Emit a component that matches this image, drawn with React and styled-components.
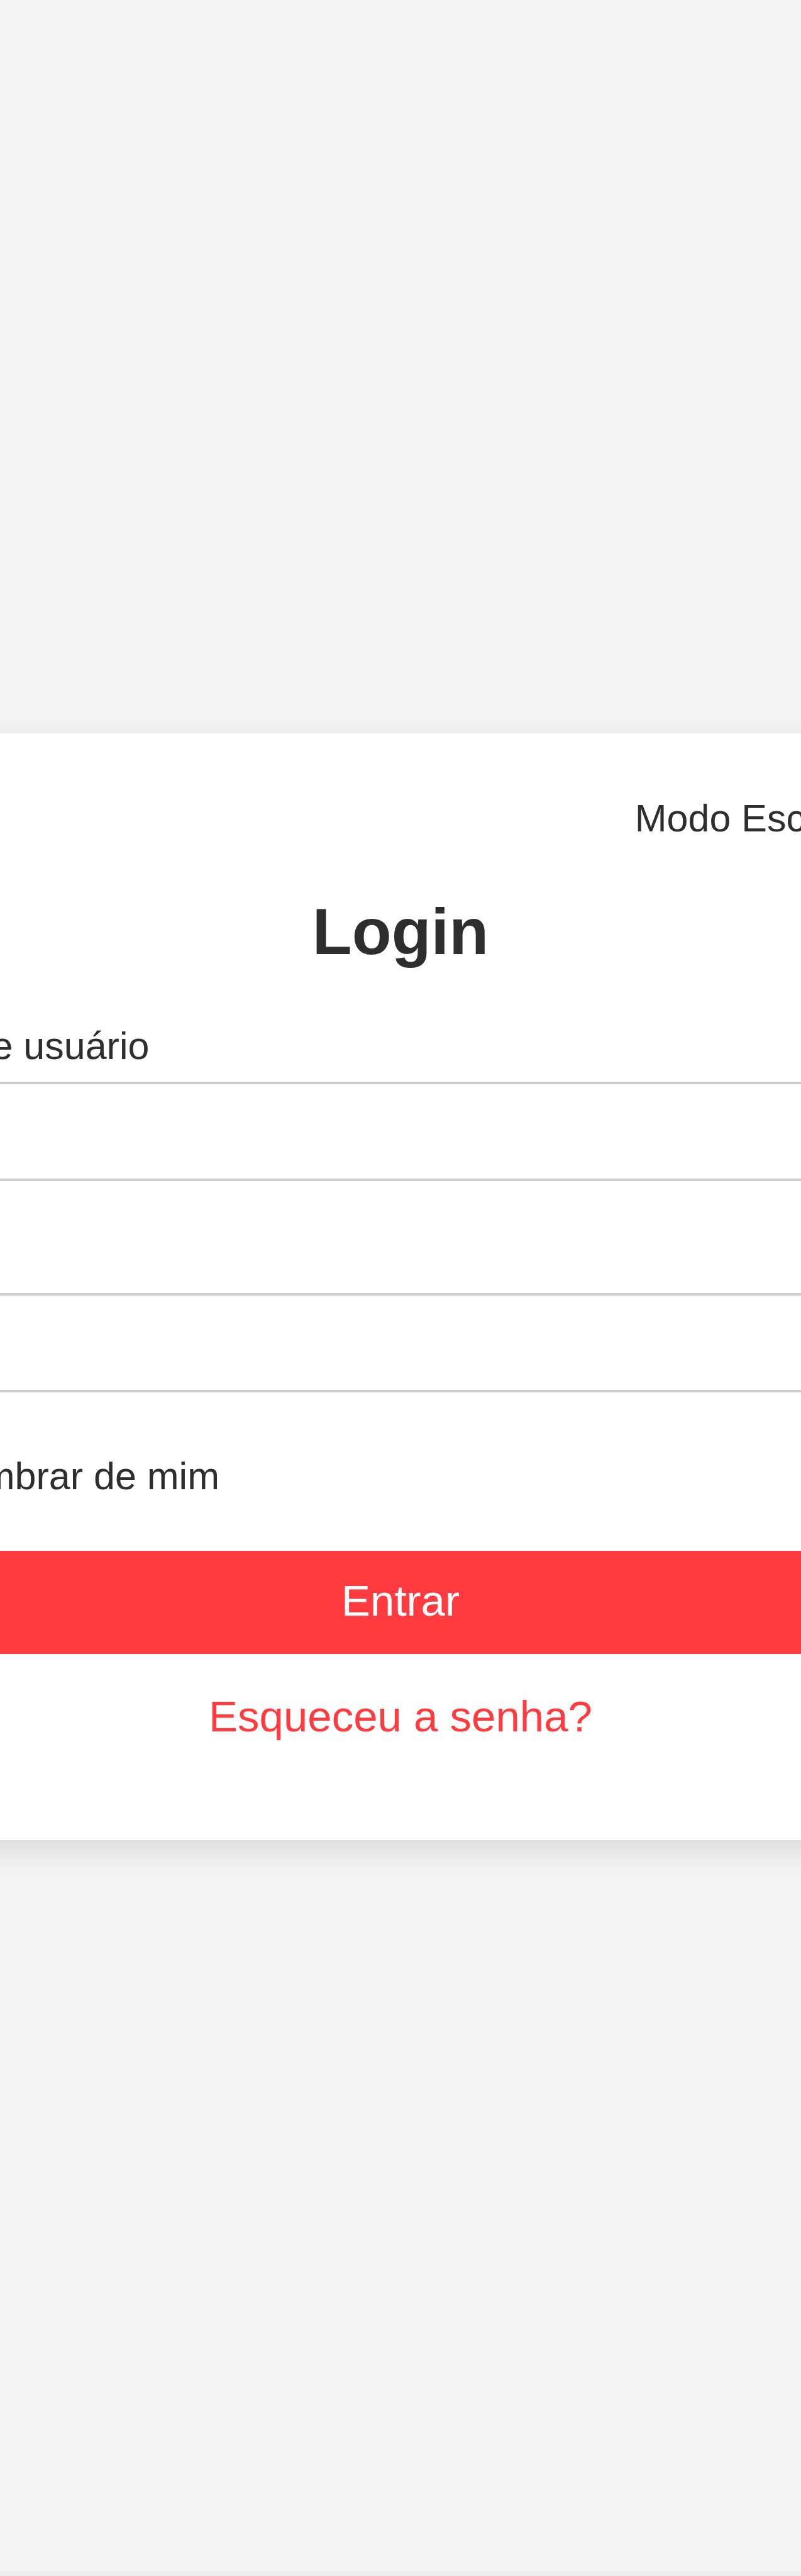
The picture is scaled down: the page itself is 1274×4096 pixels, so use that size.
import React, { useState } from "react";
import styled, { createGlobalStyle } from "styled-components";

const GlobalStyle = createGlobalStyle`
  *, *::before, *::after { box-sizing: border-box; }
  body {
    margin: 0;
    background: #f3f3f3;
    color: #2e2e2e;
    font-family: "Liberation Sans", Arial, sans-serif;
  }
`;

const Page = styled.div`
  display: flex;
  flex-direction: column;
  min-height: 100vh;
  overflow: hidden;
`;

const Main = styled.main`
  flex: 1;
  display: flex;
  align-items: center;
  justify-content: center;
  padding-top: 4px;
`;

const Footer = styled.footer`
  height: 8px;
  background: #ececec;
`;

const Card = styled.form`
  flex: none;
  display: flex;
  flex-direction: column;
  width: 149vw;
  padding: 100px 85px 156px;
  background: #fff;
  box-shadow: 0 17px 43px rgba(0, 0, 0, 0.1);
`;

const CheckLabel = styled.label`
  display: flex;
  align-items: center;
  align-self: ${(p) => (p.$end ? "flex-end" : "flex-start")};
  flex-direction: ${(p) => (p.$end ? "row-reverse" : "row")};
  gap: 28px;
  margin-top: ${(p) => (p.$end ? "0" : "12px")};
  font-size: 61px;
  line-height: 70px;
  white-space: nowrap;
`;

const Check = styled.input`
  width: 104px;
  height: 56px;
  margin: 0;
  accent-color: #ff3b3f;
`;

const Title = styled.h1`
  margin: 86px 0;
  font-size: 103px;
  line-height: 120px;
  font-weight: 700;
  text-align: center;
`;

const Field = styled.div`
  display: flex;
  flex-direction: column;
  gap: 22px;
  margin-bottom: 86px;
`;

const FieldLabel = styled.label`
  font-size: 61px;
  line-height: 70px;
`;

const TextInput = styled.input`
  width: 100%;
  height: 158px;
  padding: 0 43px;
  border: 4px solid #ccc;
  border-radius: 17px;
  background: #fff;
  color: #333;
  font: 61px "Liberation Sans", Arial, sans-serif;
  outline: none;
`;

const SubmitButton = styled.button`
  margin: 84px 0 60px;
  padding: 40px 0 44px;
  border: 0;
  border-radius: 17px;
  background: #ff3b3f;
  color: #fff;
  font: 69px/80px "Liberation Sans", Arial, sans-serif;
  cursor: pointer;
`;

const ForgotLink = styled.a`
  align-self: center;
  color: #ff3b3f;
  font-size: 69px;
  line-height: 80px;
  text-decoration: none;
`;

export default function App() {
  const [dark, setDark] = useState(false);
  const [remember, setRemember] = useState(false);

  return (
    <Page>
      <GlobalStyle />
      <Main>
        <Card onSubmit={(e) => e.preventDefault()}>
          <CheckLabel $end>
            <Check
              type="checkbox"
              checked={dark}
              onChange={(e) => setDark(e.target.checked)}
            />
            Modo Escuro
          </CheckLabel>
          <Title>Login</Title>
          <Field>
            <FieldLabel htmlFor="user">Nome de usuário</FieldLabel>
            <TextInput id="user" type="text" autoComplete="username" />
          </Field>
          <Field>
            <FieldLabel htmlFor="password">Senha</FieldLabel>
            <TextInput id="password" type="password" autoComplete="current-password" />
          </Field>
          <CheckLabel>
            <Check
              type="checkbox"
              checked={remember}
              onChange={(e) => setRemember(e.target.checked)}
            />
            Lembrar de mim
          </CheckLabel>
          <SubmitButton type="submit">Entrar</SubmitButton>
          <ForgotLink href="#recuperar">Esqueceu a senha?</ForgotLink>
        </Card>
      </Main>
      <Footer />
    </Page>
  );
}
